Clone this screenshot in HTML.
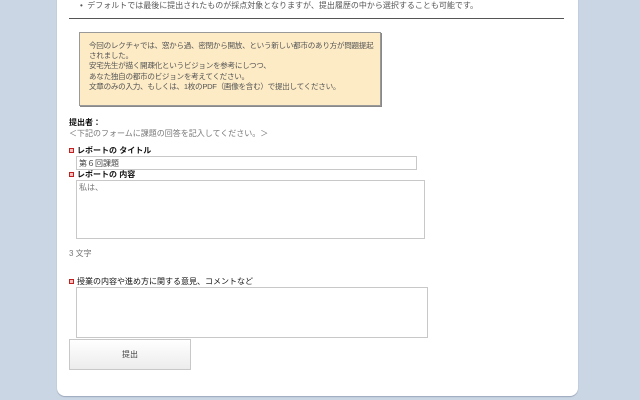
<!DOCTYPE html>
<html><head><meta charset="utf-8"><style>
body{margin:0;width:640px;height:400px;background:#cbd6e4;position:relative;overflow:hidden;font-family:"Liberation Sans","Noto Sans CJK JP",sans-serif;font-size:8px;color:#333}
.panel{position:absolute;left:57px;top:-10px;width:521px;height:406px;background:#fff;border-radius:0 0 8px 8px;box-shadow:0 1px 1px #9aa8bb}
.a{position:absolute;white-space:nowrap}
.box{position:absolute;left:79px;top:32px;width:302px;height:74px;background:#fdebc6;border:1px solid #999;box-shadow:1px 1px 0 #888;color:#555;line-height:10.2px;padding:8px 0 0 9px;box-sizing:border-box;white-space:nowrap;letter-spacing:-0.3px;font-size:7.6px}
.sq{display:inline-block;width:3px;height:3px;border:1.5px solid #c02020;background:#f4c0c0;margin-right:3px;vertical-align:middle}
.in{position:absolute;border:1px solid #c8c8c8;background:#fff;box-sizing:border-box}
.lbl{font-weight:bold;color:#111}
</style></head><body>
<div class="panel"></div>
<div class="a" style="left:80px;top:0px;color:#555">•&nbsp; デフォルトでは最後に提出されたものが採点対象となりますが、提出履歴の中から選択することも可能です。</div>
<div class="a" style="left:69px;top:18px;width:495px;height:1px;background:#555"></div>
<div class="box">今回のレクチャでは、窓から過、密閉から開放、という新しい都市のあり方が問題提起<br>されました。<br>安宅先生が描く開疎化というビジョンを参考にしつつ、<br>あなた独自の都市のビジョンを考えてください。<br>文章のみの入力、もしくは、1枚のPDF（画像を含む）で提出してください。</div>
<div class="a lbl" style="left:69px;top:117px">提出者：</div>
<div class="a" style="left:69px;top:128px;color:#777">＜下記のフォームに課題の回答を記入してください。＞</div>
<div class="a lbl" style="left:69px;top:145px"><span class="sq"></span>レポートの タイトル</div>
<div class="in" style="left:76px;top:156px;width:341px;height:14px;padding:1px 2px;color:#444">第６回課題</div>
<div class="a lbl" style="left:69px;top:169px"><span class="sq"></span>レポートの 内容</div>
<div class="in" style="left:76px;top:180px;width:349px;height:59px;padding:1px 2px;color:#777">私は、</div>
<div class="a" style="left:69px;top:248px;color:#777">3 文字</div>
<div class="a" style="left:69px;top:276px;color:#111"><span class="sq"></span>授業の内容や進め方に関する意見、コメントなど</div>
<div class="in" style="left:76px;top:287px;width:352px;height:51px"></div>
<div class="in" style="left:69px;top:339px;width:122px;height:31px;background:linear-gradient(#fff,#ececec);text-align:center;line-height:29px;color:#444">提出</div>
</body></html>
